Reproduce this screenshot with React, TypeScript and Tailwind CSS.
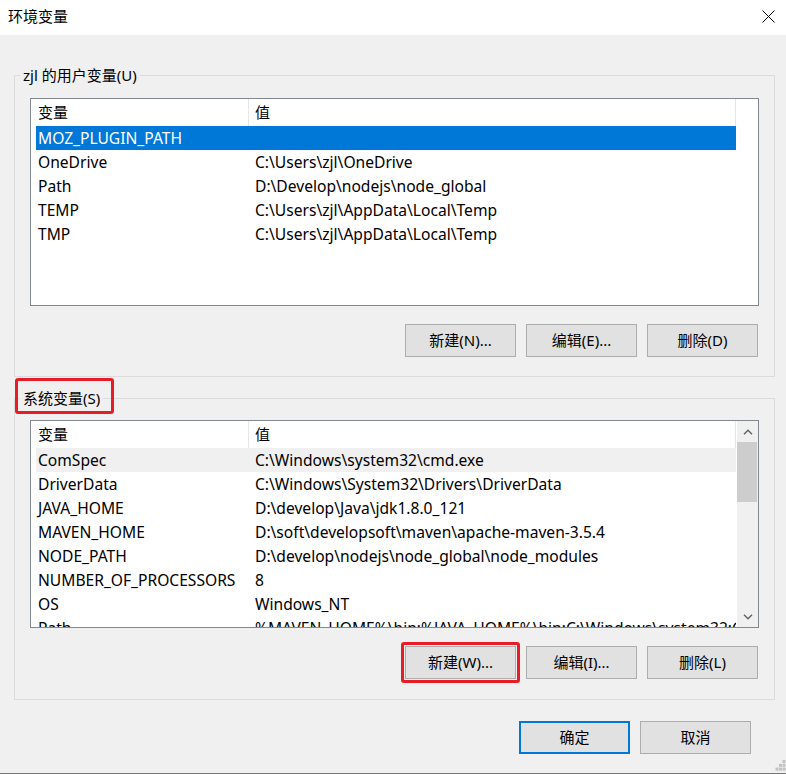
import React from "react";

type Row = [string, string];

const userVars: Row[] = [
  ["MOZ_PLUGIN_PATH", ""],
  ["OneDrive", "C:\\Users\\zjl\\OneDrive"],
  ["Path", "D:\\Develop\\nodejs\\node_global"],
  ["TEMP", "C:\\Users\\zjl\\AppData\\Local\\Temp"],
  ["TMP", "C:\\Users\\zjl\\AppData\\Local\\Temp"],
];

const sysVars: Row[] = [
  ["ComSpec", "C:\\Windows\\system32\\cmd.exe"],
  ["DriverData", "C:\\Windows\\System32\\Drivers\\DriverData"],
  ["JAVA_HOME", "D:\\develop\\Java\\jdk1.8.0_121"],
  ["MAVEN_HOME", "D:\\soft\\developsoft\\maven\\apache-maven-3.5.4"],
  ["NODE_PATH", "D:\\develop\\nodejs\\node_global\\node_modules"],
  ["NUMBER_OF_PROCESSORS", "8"],
  ["OS", "Windows_NT"],
  ["Path", "%MAVEN_HOME%\\bin;%JAVA_HOME%\\bin;C:\\Windows\\system32;C:\\Windows;C:\\Windows\\System32\\Wbem"],
];

const Chevron = ({ up }: { up?: boolean }) => (
  <svg width="10" height="6" viewBox="0 0 10 6">
    <path
      d={up ? "M1 5.2 L5 1.2 L9 5.2" : "M1 0.8 L5 4.8 L9 0.8"}
      fill="none"
      stroke="#606060"
      strokeWidth="1.4"
    />
  </svg>
);

function VarList({ rows, selected, dim, scroll }: { rows: Row[]; selected: number; dim?: boolean; scroll?: boolean }) {
  return (
    <div className="flex h-[208px] overflow-hidden border border-[#828790] bg-white text-[15.6px]">
      <div className="flex-1 overflow-hidden">
        <div className="flex h-[27px] pl-[5px] text-[15px] leading-[27px]">
          <div className="w-[213px] border-r border-[#e5e5e5] pl-[2px]">变量</div>
          <div className="w-[487px] border-r border-[#e5e5e5] pl-[6px]">值</div>
        </div>
        <div className="pl-[5px]">
          {rows.map(([name, value], i) => {
            const sel = i === selected;
            const bg = sel ? (dim ? "bg-[#f0f0f0] text-black" : "bg-[#0078d7] text-white") : "text-black";
            return (
              <div key={name + i} className={`flex h-[24px] w-[700px] leading-[24px] ${bg}`}>
                <div className="w-[213px] overflow-hidden whitespace-nowrap pl-[2px]">{name}</div>
                <div className="w-[487px] overflow-hidden whitespace-nowrap pl-[6px]">{value}</div>
              </div>
            );
          })}
        </div>
      </div>
      {scroll && (
        <div className="flex w-[21px] flex-col bg-[#f0f0f0]">
          <div className="flex h-[21px] items-center justify-center">
            <Chevron up />
          </div>
          <div className="mr-[1px] h-[60px] bg-[#cdcdcd]" />
          <div className="flex-1" />
          <div className="flex h-[21px] items-center justify-center">
            <Chevron />
          </div>
        </div>
      )}
    </div>
  );
}

function Btn({ children, primary }: { children: React.ReactNode; primary?: boolean }) {
  return (
    <button
      className={`h-[33px] w-[111px] bg-[#e1e1e1] text-[15px] text-black ${
        primary ? "border-2 border-[#0078d7]" : "border border-[#adadad]"
      }`}
    >
      {children}
    </button>
  );
}

function Highlight({ children, className }: { children: React.ReactNode; className: string }) {
  return (
    <span className="relative inline-block">
      {children}
      <span className={`pointer-events-none absolute rounded-[3px] border-[3px] border-[#e81c27] ${className}`} />
    </span>
  );
}

export default function App() {
  return (
    <div className="relative flex h-[774px] w-[786px] flex-col bg-[#f0f0f0] font-['Noto_Sans','Noto_Sans_CJK_SC',sans-serif] text-[15px] text-black">
      <div className="flex h-[35px] items-start justify-between bg-white pl-[8px] pr-[11px]">
        <span className="pt-[6px] leading-[20px]">环境变量</span>
        <svg className="mt-[10px]" width="13" height="13" viewBox="0 0 13 13">
          <path d="M0.5 0.5 L12.5 12.5 M12.5 0.5 L0.5 12.5" stroke="#000" strokeWidth="1" />
        </svg>
      </div>

      <div className="flex flex-1 flex-col pl-[14px] pr-[11px]">
        <fieldset className="mt-[30px] border border-[#dcdcdc]">
          <legend className="ml-[5px] px-[3px] leading-[20px]">zjl 的用户变量(U)</legend>
          <div className="px-[15px] pb-[19px] pt-[13px]">
            <VarList rows={userVars} selected={0} />
            <div className="mr-[1px] mt-[18px] flex justify-end gap-[10px]">
              <Btn>新建(N)...</Btn>
              <Btn>编辑(E)...</Btn>
              <Btn>删除(D)</Btn>
            </div>
          </div>
        </fieldset>

        <fieldset className="mt-[11px] border border-[#dcdcdc]">
          <legend className="ml-[5px] px-[3px] leading-[20px]">
            <Highlight className="-bottom-[6px] -left-[8px] -right-[14px] -top-[10px]">系统变量(S)</Highlight>
          </legend>
          <div className="px-[15px] pb-[20px] pt-[12px]">
            <VarList rows={sysVars} selected={0} dim scroll />
            <div className="mr-[1px] mt-[18px] flex justify-end gap-[10px]">
              <Highlight className="-inset-[4px]">
                <Btn>新建(W)...</Btn>
              </Highlight>
              <Btn>编辑(I)...</Btn>
              <Btn>删除(L)</Btn>
            </div>
          </div>
        </fieldset>

        <div className="mt-[21px] flex justify-end gap-[10px] pr-[24px]">
          <Btn primary>确定</Btn>
          <Btn>取消</Btn>
        </div>
      </div>

      <svg className="absolute bottom-[3px] right-0" width="11" height="11" viewBox="0 0 11 11">
        <g fill="#c2c2c2">
          <rect x="7.5" y="0" width="3" height="3" />
          <rect x="4" y="3.8" width="3" height="3" />
          <rect x="7.5" y="3.8" width="3" height="3" />
          <rect x="0.5" y="7.6" width="3" height="3" />
          <rect x="4" y="7.6" width="3" height="3" />
          <rect x="7.5" y="7.6" width="3" height="3" />
        </g>
      </svg>
      <div className="h-[1px] bg-[#7a7a7a]" />
    </div>
  );
}
